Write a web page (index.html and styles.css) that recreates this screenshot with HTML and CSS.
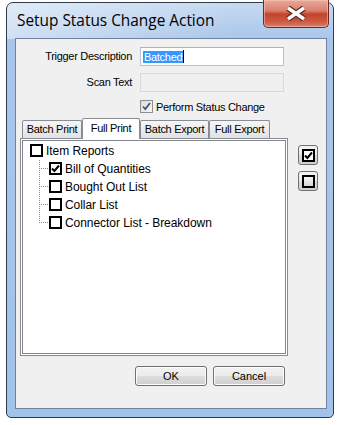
FILE: index.html
```html
<!DOCTYPE html>
<html>
	<head>
		<meta charset="utf-8" />
		<title>Setup Status Change Action</title>
		<link rel="stylesheet" href="styles.css">
	</head>

	<body>
		<div class="window">
			<div class="titlebar">
				<span class="title">Setup Status Change Action</span>
				<span class="close">
					<svg width="24" height="15" viewBox="0 0 24 15">
						<path d="M4 2 L20 13 M20 2 L4 13" stroke="#5a2a22" stroke-width="6" fill="none" />
						<path d="M4 2 L20 13 M20 2 L4 13" stroke="#ffffff" stroke-width="3.4" fill="none" />
					</svg>
				</span>
			</div>

			<div class="client">
				<div class="form">
					<label class="lbl">Trigger Description</label>
					<div class="field"><span class="sel">Batched</span><span class="caret"></span></div>
					<label class="lbl">Scan Text</label>
					<div class="field disabled"></div>
					<span></span>
					<div class="check">
						<span class="cbox">
							<svg width="11" height="11" viewBox="0 0 11 11">
								<path d="M2 5.5 L4.3 8 L9 2" stroke="#43557f" stroke-width="1.8" fill="none" />
							</svg>
						</span>
						Perform Status Change
					</div>
				</div>

				<div class="main">
					<div class="tabset">
						<div class="tabs">
							<span class="tab w60">Batch Print</span>
							<span class="tab active">Full Print</span>
							<span class="tab w69">Batch Export</span>
							<span class="tab w61">Full Export</span>
						</div>
						<div class="panel">
							<div class="tree">
								<div class="row">
									<span class="tbox"></span>Item Reports
								</div>
								<div class="children">
									<div class="row">
										<span class="branch"></span>
										<span class="tbox">
											<svg width="9" height="9" viewBox="0 0 9 9">
												<path d="M1 4.5 L3.4 7 L8 1.5" stroke="#000" stroke-width="2" fill="none" />
											</svg>
										</span>Bill of Quantities
									</div>
									<div class="row">
										<span class="branch"></span><span class="tbox"></span>Bought Out List
									</div>
									<div class="row">
										<span class="branch"></span><span class="tbox"></span>Collar List
									</div>
									<div class="row last">
										<span class="branch"></span><span class="tbox"></span>Connector List - Breakdown
									</div>
								</div>
							</div>
						</div>
					</div>

					<div class="side">
						<span class="sbtn">
							<span class="tbox">
								<svg width="9" height="9" viewBox="0 0 9 9">
									<path d="M1 4.5 L3.4 7 L8 1.5" stroke="#000" stroke-width="2" fill="none" />
								</svg>
							</span>
						</span>
						<span class="sbtn"><span class="tbox grey"></span></span>
					</div>
				</div>

				<div class="buttons">
					<span class="btn">OK</span>
					<span class="btn">Cancel</span>
				</div>
			</div>
		</div>
	</body>

</html>
```

FILE: styles.css
```css
body {
	margin: 0;
	padding: 0;
	background: #fff;
	font-family: "Liberation Sans", Arial, sans-serif;
	font-size: 11px;
	letter-spacing: -0.3px;
	color: #000;
}

.window {
	box-sizing: border-box;
	width: 328px;
	height: 416px;
	margin: 2px 0 0 6px;
	padding: 0 6px 8px 8px;
	border: 1px solid #2f3a4a;
	border-radius: 7px 7px 5px 5px;
	background:
		linear-gradient(to right, rgba(255, 255, 255, 0.45), rgba(255, 255, 255, 0) 70%) 0 0 / 100% 36px no-repeat,
		linear-gradient(to bottom, #c6daf1, #a9c6ea 36px, #a3c2e9);
	display: flex;
	flex-direction: column;
}

.titlebar {
	height: 35px;
	display: flex;
	justify-content: space-between;
	align-items: flex-start;
}

.title {
	padding: 8px 0 0 2px;
	font-family: "Open Sans", "Noto Sans", sans-serif;
	font-size: 15.4px;
	line-height: 20px;
	letter-spacing: 0;
	color: #000;
}

.close {
	box-sizing: border-box;
	width: 66px;
	height: 28px;
	margin: -3px -2px 0 0;
	border: 1px solid #6b2b22;
	border-top: none;
	border-radius: 0 0 5px 5px;
	background: linear-gradient(to bottom, #e9a999 0%, #d9806d 40%, #c5432c 52%, #cd5a43 80%, #d9806a 100%);
	box-shadow: inset 0 0 0 1px rgba(255, 210, 200, 0.5);
	display: flex;
	align-items: center;
	justify-content: center;
}

.client {
	box-sizing: border-box;
	flex: 1;
	border: 1px solid #6f819b;
	background: #f0f0f0;
	display: flex;
	flex-direction: column;
}

.form {
	display: grid;
	grid-template-columns: 116px 144px;
	column-gap: 8px;
	row-gap: 7px;
	padding-top: 8px;
}

.lbl {
	text-align: right;
	line-height: 19px;
}

.field {
	box-sizing: border-box;
	height: 19px;
	border: 1px solid #b4c3d6;
	border-top-color: #a7b4c6;
	background: #fff;
	display: flex;
	align-items: center;
	padding-left: 2px;
}

.field.disabled {
	border-color: #d9d9d9;
	background: #f0f0f0;
}

.sel {
	background: #3399ff;
	color: #fff;
	line-height: 12px;
	padding: 0 1px;
}

.caret {
	width: 1px;
	height: 13px;
	background: #000;
}

.check {
	display: flex;
	align-items: center;
	height: 13px;
	margin-top: 1px;
}

.cbox {
	box-sizing: border-box;
	width: 13px;
	height: 13px;
	margin-right: 3px;
	border: 1px solid #8e8f8f;
	background: linear-gradient(135deg, #dcdcdc, #f8f8f8);
	display: flex;
	align-items: center;
	justify-content: center;
}

.main {
	display: flex;
	margin-top: 5px;
}

.tabset {
	width: 268px;
	margin-left: 4px;
	display: flex;
	flex-direction: column;
}

.tabs {
	height: 20px;
	padding-left: 2px;
	display: flex;
	align-items: flex-end;
}

.tab {
	box-sizing: border-box;
	height: 18px;
	border: 1px solid #898c95;
	border-bottom: none;
	border-radius: 2px 2px 0 0;
	background: linear-gradient(to bottom, #f6f6f6, #e1e1e1);
	text-align: center;
	line-height: 17px;
}

.tab.active {
	width: 58px;
	height: 21px;
	margin-bottom: -1px;
	background: #fff;
	line-height: 18px;
	position: relative;
}

.w60 {
	width: 60px;
}

.w69 {
	width: 69px;
}

.w61 {
	width: 61px;
}

.panel {
	box-sizing: border-box;
	height: 218px;
	border: 1px solid #898c95;
	padding: 1px;
	background: #fff;
}

.tree {
	box-sizing: border-box;
	height: 100%;
	border: 1px solid #828790;
	padding: 1px 0 0 7px;
	font-size: 12px;
	letter-spacing: -0.05px;
}

.row {
	height: 18px;
	display: flex;
	align-items: flex-start;
	line-height: 18px;
}

.tbox {
	box-sizing: border-box;
	width: 13px;
	height: 13px;
	margin: 2px 3px 0 0;
	border: 2px solid #000;
	background: #fff;
	display: flex;
	align-items: center;
	justify-content: center;
}

.tbox.grey {
	background: linear-gradient(to bottom, #f4f4f4, #d6d6d6);
}

.children {
	margin-left: 9px;
}

.branch {
	width: 10px;
	height: 18px;
	background:
		repeating-linear-gradient(to bottom, #8c8c8c 0 1px, transparent 1px 2px) 0 0 / 1px 100% no-repeat,
		repeating-linear-gradient(to right, #8c8c8c 0 1px, transparent 1px 2px) 2px 8px / 8px 1px no-repeat;
}

.last .branch {
	background:
		repeating-linear-gradient(to bottom, #8c8c8c 0 1px, transparent 1px 2px) 0 0 / 1px 9px no-repeat,
		repeating-linear-gradient(to right, #8c8c8c 0 1px, transparent 1px 2px) 2px 8px / 8px 1px no-repeat;
}

.side {
	margin: 27px 0 0 10px;
	display: flex;
	flex-direction: column;
	gap: 6px;
}

.sbtn {
	box-sizing: border-box;
	width: 20px;
	height: 20px;
	border: 1px solid #707070;
	border-radius: 3px;
	background: linear-gradient(to bottom, #f2f2f2, #ebebeb 50%, #dddddd 51%, #cfcfcf);
	display: flex;
	align-items: center;
	justify-content: center;
}

.sbtn .tbox {
	margin: 0;
}

.buttons {
	display: flex;
	gap: 6px;
	margin-top: 10px;
	padding-left: 119px;
}

.btn {
	box-sizing: border-box;
	width: 72px;
	height: 20px;
	border: 1px solid #707070;
	border-radius: 3px;
	background: linear-gradient(to bottom, #f2f2f2, #ebebeb 50%, #dddddd 51%, #cfcfcf);
	box-shadow: inset 0 0 0 1px #fcfcfc;
	text-align: center;
	line-height: 18px;
	letter-spacing: 0;
}
```
